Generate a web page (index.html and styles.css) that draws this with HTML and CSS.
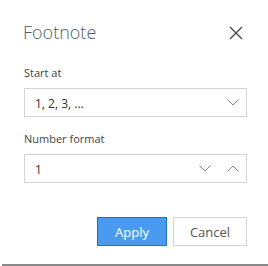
FILE: index.html
```html
<!DOCTYPE html>
<html lang="en">
<head>
<meta charset="utf-8">
<title>Footnote</title>
<link rel="stylesheet" href="styles.css">
</head>
<body>
<div class="dlg">
	<div class="hdr">
		<h1>Footnote</h1>
		<svg class="close" width="14" height="14" viewBox="0 0 14 14"><path d="M1 1L13 13M13 1L1 13" stroke="#444" stroke-width="1.3" fill="none"/></svg>
	</div>
	<div class="lbl">Start at</div>
	<div class="fld">
		<span class="val">1, 2, 3, ...</span>
		<svg class="chev" width="12" height="7" viewBox="0 0 12 7"><path d="M0.5 0.5L6 6L11.5 0.5" stroke="#8a8a8a" fill="none"/></svg>
	</div>
	<div class="lbl">Number format</div>
	<div class="fld">
		<span class="val">1</span>
		<svg class="chev dn" width="12" height="7" viewBox="0 0 12 7"><path d="M0.5 0.5L6 6L11.5 0.5" stroke="#8a8a8a" fill="none"/></svg>
		<svg class="chev" width="12" height="7" viewBox="0 0 12 7"><path d="M0.5 6.5L6 1L11.5 6.5" stroke="#8a8a8a" fill="none"/></svg>
	</div>
	<div class="btns">
		<button class="btn apply">Apply</button>
		<button class="btn">Cancel</button>
	</div>
</div>
<div class="rule"></div>
</body>
</html>
```
FILE: styles.css
```css
body {
	margin: 0;
	width: 268px;
	height: 266px;
	background: #fff;
	font-family: "Open Sans", "Noto Sans", sans-serif;
	color: #333;
}
.dlg {
	padding: 0 21px 0 24px;
	height: 264px;
}
.hdr {
	display: flex;
	align-items: center;
	justify-content: space-between;
	height: 34px;
	padding-top: 16px;
	margin-left: -1px;
}
h1 {
	margin: -3px 0 0;
	font-size: 18px;
	font-weight: 300;
	color: #4d5f6b;
}
.close {
	margin-right: 4px;
}
.lbl {
	font-size: 11px;
	color: #444;
	margin-top: 15px;
	height: 16px;
	line-height: 16px;
}
.lbl + .fld {
	margin-top: 7px;
}
.fld + .lbl {
	margin-top: 14px;
}
.fld {
	display: flex;
	align-items: center;
	height: 27px;
	border: 1px solid #d4d4d4;
	padding: 0 7px 0 10px;
}
.val {
	flex: 1;
	font-size: 12px;
	color: #333;
	padding-top: 2px;
}
.chev.dn {
	margin-right: 16px;
}
.btns {
	display: flex;
	justify-content: flex-end;
	gap: 6px;
	margin-top: 34px;
}
.btn {
	height: 29px;
	width: 74px;
	border: 1px solid #d4d4d4;
	background: #fff;
	font-family: "Open Sans", "Noto Sans", sans-serif;
	font-size: 13px;
	color: #555;
	padding: 0;
}
.apply {
	width: 70px;
	background: #4a9bf0;
	border-color: #1f72c4;
	color: #fff;
}
.rule {
	height: 2px;
	margin-left: 2px;
	background: #8a8a8a;
}
```
